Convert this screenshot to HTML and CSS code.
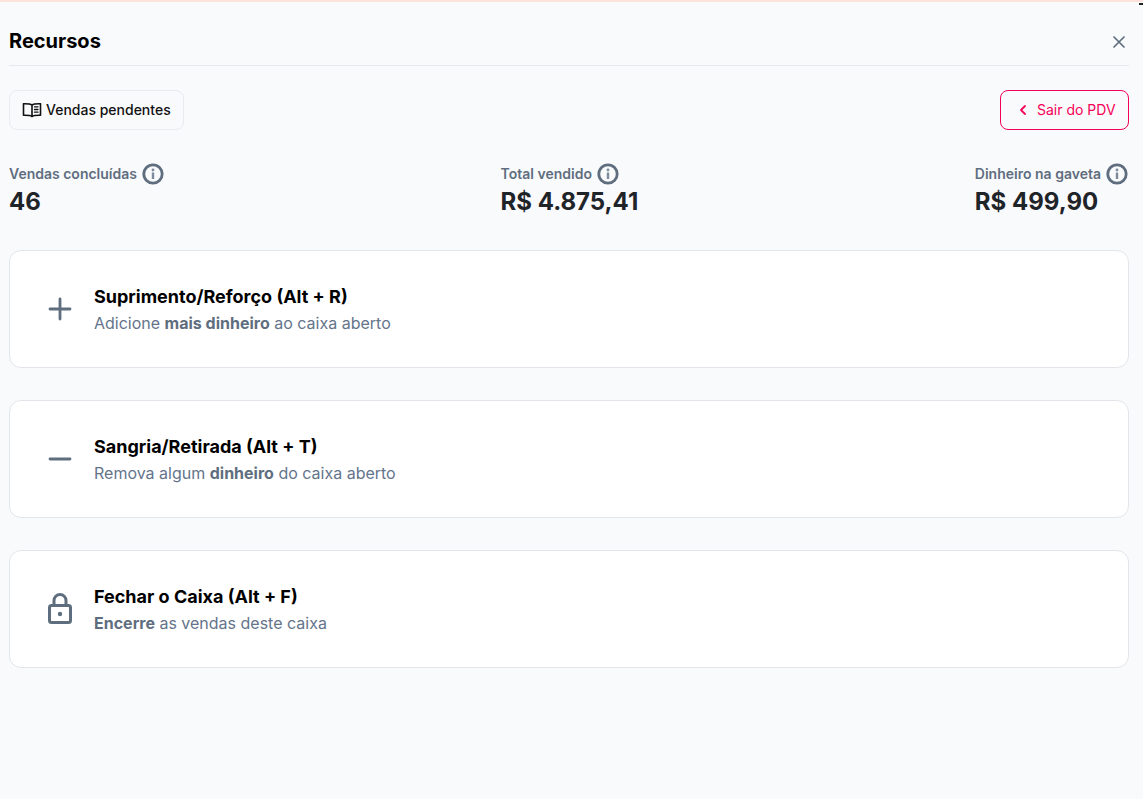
FILE: index.html
```html
<!DOCTYPE html>
<html lang="pt-BR">
<head>
<meta charset="utf-8">
<title>Recursos</title>
<link rel="stylesheet" href="styles.css">
</head>
<body>
<div class="topline"></div>
<div class="cursor-mark"></div>
<main class="panel">
  <header class="head">
    <h1 class="title">Recursos</h1>
    <button class="close" aria-label="Fechar">
      <svg width="14" height="14" viewBox="0 0 14 14" fill="none" stroke="#5f6e7f" stroke-width="1.7" stroke-linecap="round"><path d="M2 2l10 10M12 2L2 12"/></svg>
    </button>
  </header>
  <div class="actions">
    <button class="btn btn-plain">
      <svg width="20" height="20" viewBox="0 0 20 20" fill="none" stroke="#111" stroke-width="1.6" stroke-linecap="round" stroke-linejoin="round"><path d="M10 5C8.500 3.800 6 3.600 1.500 3.700v11.600c4.500-.1 7 .1 8.500 1.200 1.500-1.100 4-1.300 8.500-1.200V3.700C14 3.600 11.500 3.800 10 5zM10 5v11.500"/><path d="M12.500 6.800h3.500M12.500 9.500h3.500M12.500 12.200h3.500" stroke-width="1.300"/></svg>
      Vendas pendentes
    </button>
    <button class="btn btn-exit">
      <svg width="10" height="12" viewBox="0 0 10 12" fill="none" stroke="#f50057" stroke-width="1.800" stroke-linecap="round" stroke-linejoin="round"><path d="M7 2L3 6l4 4"/></svg>
      Sair do PDV
    </button>
  </div>
  <section class="stats">
    <div class="stat">
      <div class="stat-label"><span class="stat-name">Vendas concluídas</span>
        <svg class="info" viewBox="0 0 22 22"><circle cx="11" cy="11" r="9.200" fill="none" stroke="#5f6e7f" stroke-width="2.800"/><circle cx="11" cy="7" r="1.400" fill="#7d8a99"/><rect x="9.800" y="9.500" width="2.400" height="6.500" fill="#7d8a99"/></svg>
      </div>
      <div class="stat-value">46</div>
    </div>
    <div class="stat">
      <div class="stat-label"><span class="stat-name">Total vendido</span>
        <svg class="info" viewBox="0 0 22 22"><circle cx="11" cy="11" r="9.200" fill="none" stroke="#5f6e7f" stroke-width="2.800"/><circle cx="11" cy="7" r="1.400" fill="#7d8a99"/><rect x="9.800" y="9.500" width="2.400" height="6.500" fill="#7d8a99"/></svg>
      </div>
      <div class="stat-value">R$ 4.875,41</div>
    </div>
    <div class="stat">
      <div class="stat-label"><span class="stat-name">Dinheiro na gaveta</span>
        <svg class="info" viewBox="0 0 22 22"><circle cx="11" cy="11" r="9.200" fill="none" stroke="#5f6e7f" stroke-width="2.800"/><circle cx="11" cy="7" r="1.400" fill="#7d8a99"/><rect x="9.800" y="9.500" width="2.400" height="6.500" fill="#7d8a99"/></svg>
      </div>
      <div class="stat-value">R$ 499,90</div>
    </div>
  </section>
  <section class="cards">
    <article class="card">
      <div class="card-icon">
        <svg width="24" height="24" viewBox="0 0 24 24" fill="none" stroke="#5f6e7f" stroke-width="2.800" stroke-linecap="round"><path d="M12 2v20M2 12h20"/></svg>
      </div>
      <div>
        <div class="card-title">Suprimento/Reforço (Alt + R)</div>
        <div class="card-desc">Adicione <strong>mais dinheiro</strong> ao caixa aberto</div>
      </div>
    </article>
    <article class="card">
      <div class="card-icon">
        <svg width="24" height="24" viewBox="0 0 24 24" fill="none" stroke="#5f6e7f" stroke-width="2.800" stroke-linecap="round"><path d="M2 12h20"/></svg>
      </div>
      <div>
        <div class="card-title">Sangria/Retirada (Alt + T)</div>
        <div class="card-desc">Remova algum <strong>dinheiro</strong> do caixa aberto</div>
      </div>
    </article>
    <article class="card">
      <div class="card-icon">
        <svg width="28" height="32" viewBox="0 0 28 32" fill="none" stroke="#5f6e7f" stroke-width="3" stroke-linecap="round" stroke-linejoin="round"><rect x="3.500" y="12.500" width="21" height="17" rx="2"/><path d="M8 12.500V7.500a6 6 0 0 1 12 0v5"/><circle cx="14" cy="21" r="2.200" fill="#5f6e7f" stroke="none"/></svg>
      </div>
      <div>
        <div class="card-title">Fechar o Caixa (Alt + F)</div>
        <div class="card-desc"><strong>Encerre</strong> as vendas deste caixa</div>
      </div>
    </article>
  </section>
</main>
</body>
</html>
```

FILE: styles.css
```css
* { box-sizing: border-box; }
html, body { height: 100%; }
body {
  margin: 0;
  background: #f9fafc;
  font-family: Inter, "Liberation Sans", sans-serif;
  color: #000;
  overflow: hidden;
}
.topline { height: 2px; background: #fde3dc; }
.cursor-mark {
  position: absolute;
  top: 3px;
  right: 0;
  width: 4px;
  height: 2px;
  background: #222;
}
.panel { padding: 0 14px 0 9px; }
.head {
  height: 64px;
  padding-top: 14px;
  display: flex;
  align-items: center;
  justify-content: space-between;
  border-bottom: 1px solid #e5e8ec;
}
.title { margin: 0; font-size: 20px; font-weight: 700; line-height: 28px; }
.close {
  background: none; border: 0; padding: 2px 0 0; margin-right: 3px;
  display: flex; align-items: center;
}
.actions {
  display: flex;
  justify-content: space-between;
  margin-top: 24px;
}
.btn {
  height: 40px;
  display: flex;
  align-items: center;
  font: 500 14px/20px Inter, "Liberation Sans", sans-serif;
  border-radius: 8px;
  background: transparent;
}
.btn-plain { width: 175px; padding: 0 12px; gap: 4px; border: 1px solid #e8ebef; color: #111; }
.btn-exit { width: 129px; padding: 0 0 0 17px; gap: 9px; border: 1px solid #f50057; color: #f50057; font-weight: 400; }
.stats {
  display: flex;
  justify-content: space-between;
  margin-top: 33px;
  padding-right: 1px;
}
.stat-label {
  display: flex;
  align-items: center;
  gap: 5px;
  height: 22px;
  font-size: 14px;
  font-weight: 600;
  color: #5f6e7f;
}
.stat-name { padding-bottom: 2px; }
.info { width: 22px; height: 22px; }
.stat-value {
  margin-top: 2px;
  font-size: 24px;
  font-weight: 700;
  line-height: 30px;
  color: #1f2429;
}
.cards {
  display: flex;
  flex-direction: column;
  gap: 32px;
  margin-top: 33px;
}
.card {
  height: 118px;
  display: flex;
  align-items: center;
  gap: 20px;
  padding-left: 36px;
  background: #fff;
  border: 1px solid #e2e5e9;
  border-radius: 12px;
}
.card-icon { width: 28px; height: 32px; display: flex; align-items: center; justify-content: center; }
.card-title { font-size: 18px; font-weight: 700; line-height: 26px; }
.card-desc { font-size: 16px; line-height: 22px; margin-top: 2px; color: #64748b; }
.card-desc strong { font-weight: 700; color: #5f6e7f; }
```
